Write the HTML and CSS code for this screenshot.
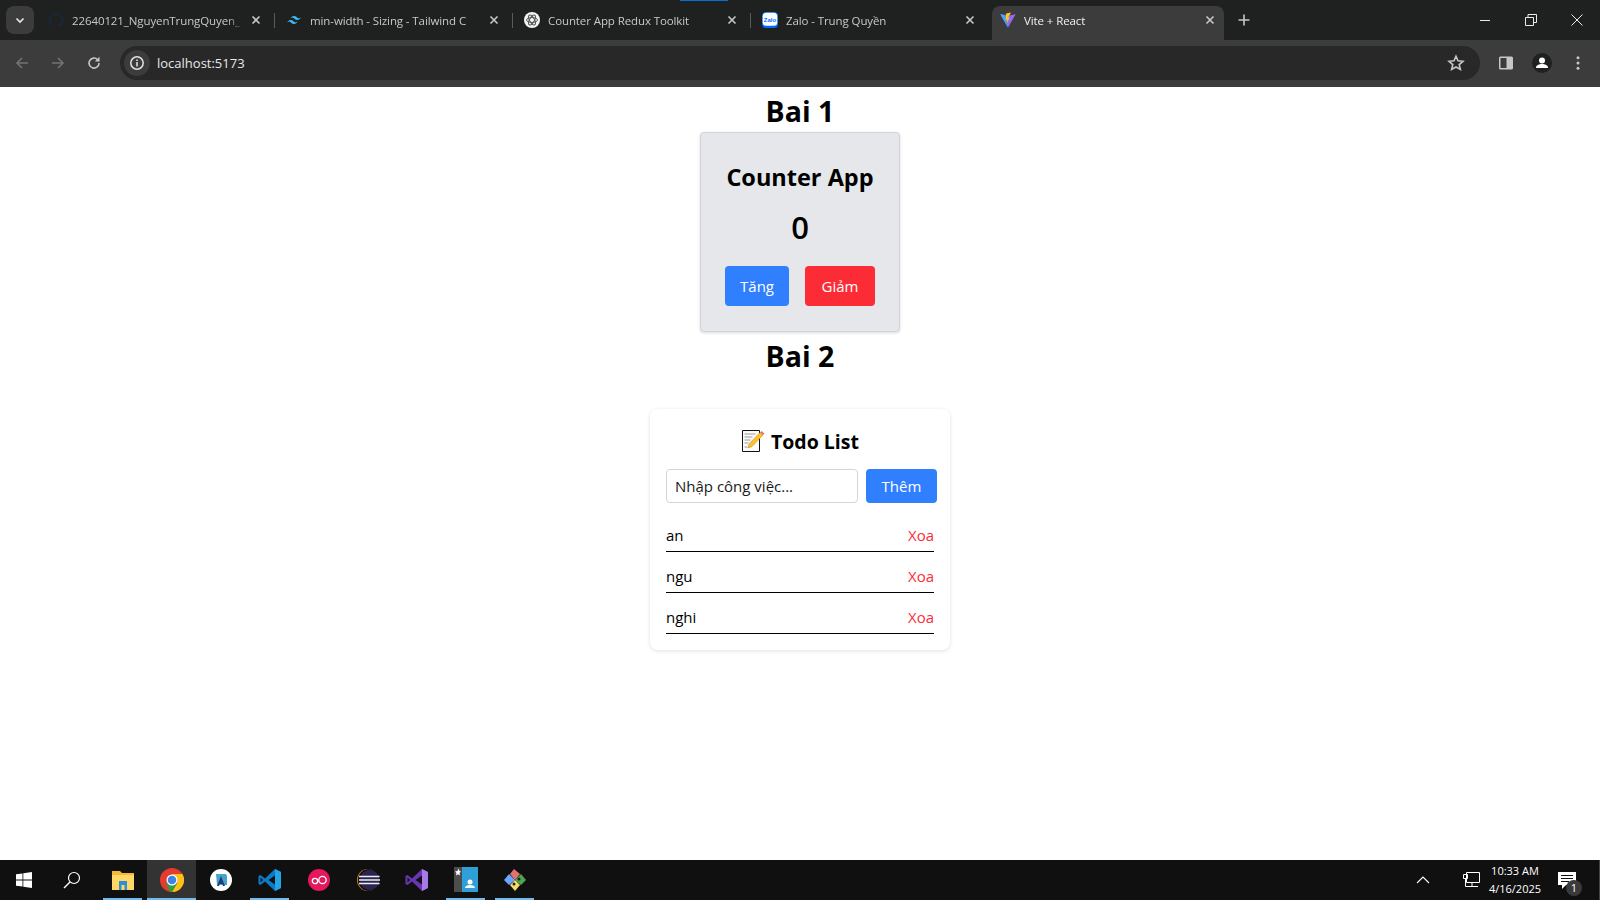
FILE: index.html
```html
<!DOCTYPE html>
<html lang="en">
<head>
    <meta charset="UTF-8">
    <title>Vite + React</title>
    <link rel="stylesheet" href="styles.css">
</head>
<body>
    <div class="share-mark"></div>

    <!-- Tab strip -->
    <div class="tabstrip">
        <div class="tab-search">
            <svg width="12" height="12" viewBox="0 0 12 12"><path d="M2.5 4.5 6 8l3.5-3.5" fill="none" stroke="#e8eaed" stroke-width="1.6"/></svg>
        </div>
        <div class="tab">
            <svg class="favicon" viewBox="0 0 16 16"><path fill="#1d2530" d="M8 0C3.58 0 0 3.58 0 8c0 3.54 2.29 6.53 5.47 7.59.4.07.55-.17.55-.38 0-.19-.01-.82-.01-1.49-2.01.37-2.53-.49-2.69-.94-.09-.23-.48-.94-.82-1.13-.28-.15-.68-.52-.01-.53.63-.01 1.08.58 1.23.82.72 1.21 1.87.87 2.33.66.07-.52.28-.87.51-1.07-1.78-.2-3.64-.89-3.64-3.95 0-.87.31-1.59.82-2.15-.08-.2-.36-1.02.08-2.12 0 0 .67-.21 2.2.82.64-.18 1.32-.27 2-.27s1.36.09 2 .27c1.53-1.04 2.2-.82 2.2-.82.44 1.1.16 1.92.08 2.12.51.56.82 1.27.82 2.15 0 3.07-1.87 3.75-3.65 3.95.29.25.54.73.54 1.48 0 1.07-.01 1.93-.01 2.2 0 .21.15.46.55.38A8.01 8.01 0 0016 8c0-4.42-3.58-8-8-8z"/></svg>
            <span class="tab-title">22640121_NguyenTrungQuyen_</span>
            <svg class="tab-close" viewBox="0 0 10 10"><path d="M1.5 1.5l7 7M8.5 1.5l-7 7"/></svg>
        </div>
        <div class="tab">
            <svg class="favicon" viewBox="0 0 24 24"><path fill="#38bdf8" d="M12 6c-2.67 0-4.33 1.33-5 4 1-1.33 2.17-1.83 3.5-1.5.76.19 1.31.74 1.91 1.35.98 1 2.12 2.15 4.59 2.15 2.67 0 4.33-1.33 5-4-1 1.33-2.17 1.83-3.5 1.5-.76-.19-1.31-.74-1.91-1.35C15.61 7.15 14.47 6 12 6zM7 12c-2.67 0-4.33 1.33-5 4 1-1.33 2.17-1.83 3.5-1.5.76.19 1.31.74 1.91 1.35C8.39 16.85 9.53 18 12 18c2.67 0 4.33-1.33 5-4-1 1.33-2.17 1.83-3.5 1.5-.76-.19-1.31-.74-1.91-1.35C10.61 13.15 9.47 12 7 12z"/></svg>
            <span class="tab-title">min-width - Sizing - Tailwind C</span>
            <svg class="tab-close" viewBox="0 0 10 10"><path d="M1.5 1.5l7 7M8.5 1.5l-7 7"/></svg>
        </div>
        <div class="tab">
            <svg class="favicon" viewBox="0 0 16 16"><circle cx="8" cy="8" r="8" fill="#f4f4f4"/><g fill="none" stroke="#555" stroke-width="1"><ellipse cx="8" cy="8" rx="5.500" ry="2.400"/><ellipse cx="8" cy="8" rx="5.500" ry="2.400" transform="rotate(60 8 8)"/><ellipse cx="8" cy="8" rx="5.500" ry="2.400" transform="rotate(120 8 8)"/></g></svg>
            <span class="tab-title">Counter App Redux Toolkit</span>
            <svg class="tab-close" viewBox="0 0 10 10"><path d="M1.5 1.5l7 7M8.5 1.5l-7 7"/></svg>
        </div>
        <div class="tab">
            <svg class="favicon" viewBox="0 0 16 16"><rect width="16" height="16" rx="4" fill="#0068ff"/><rect x=".7" y=".7" width="14.600" height="13" rx="3.500" fill="#fff"/><text x="8" y="9.600" font-size="6" font-weight="700" text-anchor="middle" fill="#0068ff" font-family="Liberation Sans, sans-serif">Zalo</text></svg>
            <span class="tab-title">Zalo - Trung Quyền</span>
            <svg class="tab-close" viewBox="0 0 10 10"><path d="M1.5 1.5l7 7M8.5 1.5l-7 7"/></svg>
        </div>
        <div class="tab tab-active">
            <svg class="favicon" viewBox="0 0 16 16"><path fill="#8f6cf5" d="M.3 2.300 8 15.600 15.700 2.300 8 3.700z"/><path fill="#3fa7ff" d="M.3 2.300 8 15.600 5 3z"/><path fill="#ffc517" d="M11 .6 6 1.600l-.4 6.600 1.600-.4-.4 3.400 3-5.600-1.700.3z"/></svg>
            <span class="tab-title">Vite + React</span>
            <svg class="tab-close" viewBox="0 0 10 10"><path d="M1.5 1.5l7 7M8.5 1.5l-7 7"/></svg>
        </div>
        <svg class="new-tab" width="12" height="12" viewBox="0 0 12 12"><path d="M6 .5v11M.5 6h11" stroke="#c4c7c5" stroke-width="1.6"/></svg>
        <div class="window-controls">
            <svg width="12" height="12" viewBox="0 0 12 12"><path d="M1 6.5h10" stroke="#e8eaed"/></svg>
            <svg width="12" height="12" viewBox="0 0 12 12"><path d="M.5 3.500h8v8h-8zM3 3.500V.5h8.500v8H8.500" fill="none" stroke="#e8eaed"/></svg>
            <svg width="12" height="12" viewBox="0 0 12 12"><path d="M.5.5l11 11M11.500.5l-11 11" stroke="#e8eaed"/></svg>
        </div>
    </div>

    <!-- Toolbar -->
    <div class="toolbar">
        <div class="nav-buttons">
            <svg width="16" height="16" viewBox="0 0 16 16"><path d="M14 8H3M8 3 3 8l5 5" fill="none" stroke="#737373" stroke-width="1.6"/></svg>
            <svg width="16" height="16" viewBox="0 0 16 16"><path d="M2 8h11M8 3l5 5-5 5" fill="none" stroke="#737373" stroke-width="1.6"/></svg>
            <svg width="16" height="16" viewBox="0 0 16 16"><path d="M13 8a5 5 0 1 1-1.500-3.500L13 6" fill="none" stroke="#c7c7c7" stroke-width="1.6"/><path d="M13.500 1.800V6.500H8.800z" fill="#c7c7c7"/></svg>
        </div>
        <div class="address-bar">
            <div class="site-info">
                <svg width="16" height="16" viewBox="0 0 16 16"><circle cx="8" cy="8" r="6.200" fill="none" stroke="#e3e3e3" stroke-width="1.500"/><path d="M8 7v4.500M8 4.500v1.500" stroke="#e3e3e3" stroke-width="1.500"/></svg>
            </div>
            <span class="url">localhost:5173</span>
            <svg class="star" width="18" height="18" viewBox="0 0 18 18"><path d="M9 2.200l2 4.600 5 .5-3.800 3.300 1.200 4.900L9 13l-4.400 2.500 1.200-4.900L2 7.300l5-.5z" fill="none" stroke="#c7c7c7" stroke-width="1.600"/></svg>
        </div>
        <div class="toolbar-actions">
            <svg width="16" height="16" viewBox="0 0 16 16"><rect x="1" y="1.500" width="14" height="13" rx="1.500" fill="#c7c7c7"/><rect x="2.500" y="3" width="6" height="10" fill="#3c3c3c"/></svg>
            <svg width="20" height="20" viewBox="0 0 20 20"><circle cx="10" cy="10" r="10" fill="#1f2121"/><circle cx="10" cy="7.500" r="3" fill="#fff"/><path d="M4 15c0-3 3-4 6-4s6 1 6 4z" fill="#fff"/></svg>
            <svg width="16" height="16" viewBox="0 0 16 16"><g fill="#c7c7c7"><circle cx="8" cy="2.800" r="1.500"/><circle cx="8" cy="8" r="1.500"/><circle cx="8" cy="13.200" r="1.500"/></g></svg>
        </div>
    </div>

    <!-- Page content -->
    <div class="page">
        <h1 class="page-title">Bai 1</h1>
        <div class="counter-card">
            <h2 class="counter-heading">Counter App</h2>
            <p class="counter-value">0</p>
            <div class="counter-buttons">
                <button class="btn btn-blue">Tăng</button>
                <button class="btn btn-red">Giảm</button>
            </div>
        </div>
        <h1 class="page-title">Bai 2</h1>
        <div class="todo-card">
            <h2 class="todo-heading">
                <svg width="24" height="24" viewBox="0 0 24 24">
                    <path d="M1.500 1.500h17v21h-17z" fill="#fafafa" stroke="#111"/>
                    <path d="M3.500 5h11M3.500 8h8M3.500 11h6M3.500 14h4M3.500 18h3" stroke="#9a9a9a"/>
                    <path d="M7 19l1-4L19 3.500l3 2.500L11 17.500z" fill="#fbc02d" stroke="#b8860b" stroke-width=".5"/>
                    <path d="M19 3.500l1.500-1.500 3 2.500L22 6z" fill="#e57373"/>
                </svg>
                <span>Todo List</span>
            </h2>
            <div class="todo-form">
                <input class="todo-input" type="text" placeholder="Nhập công việc...">
                <button class="btn btn-blue">Thêm</button>
            </div>
            <ul class="todo-list">
                <li><span>an</span><a class="todo-remove">Xoa</a></li>
                <li><span>ngu</span><a class="todo-remove">Xoa</a></li>
                <li><span>nghi</span><a class="todo-remove">Xoa</a></li>
            </ul>
        </div>
    </div>

    <!-- Windows taskbar -->
    <div class="taskbar">
        <div class="task-slot task-start">
            <svg width="16" height="16" viewBox="0 0 16 16"><path fill="#fff" d="M0 2.300 6.500 1.400v6.200H0zM7.300 1.300 16 0v7.600H7.300zM0 8.400h6.500v6.200L0 13.700zM7.300 8.400H16V16l-8.700-1.300z"/></svg>
        </div>
        <div class="task-slot task-search">
            <svg width="18" height="18" viewBox="0 0 18 18"><circle cx="11" cy="7" r="5.500" fill="none" stroke="#fff" stroke-width="1.200"/><path d="M7 11l-6 6" stroke="#fff" stroke-width="1.400"/></svg>
        </div>
        <div class="task-slot task-open">
            <svg width="22" height="20" viewBox="0 0 22 20"><path d="M0 1h8l2 2h12v17H0z" fill="#f4b63c"/><path d="M0 5h22v15H0z" fill="#ffd766"/><path d="M7 11h8v9h-2.500v-5h-3v5H7z" fill="#2b8fd8"/></svg>
        </div>
        <div class="task-slot task-open task-active">
            <svg width="24" height="24" viewBox="0 0 24 24"><circle cx="12" cy="12" r="12" fill="#e33b2e"/><path d="M12 24a12 12 0 0 0 10.400-18H12l5.200 9z" fill="#fbc116"/><path d="M1.600 6 7 15l-1 1 4 7.800A12 12 0 0 0 12 24l5.200-9H7z" fill="#2f9e44"/><circle cx="12" cy="12" r="5.500" fill="#fff"/><circle cx="12" cy="12" r="4.300" fill="#3f83e6"/></svg>
        </div>
        <div class="task-slot">
            <svg width="22" height="22" viewBox="0 0 22 22"><circle cx="11" cy="11" r="11" fill="#fff"/><path d="M6 5h10l1 2v9H7z" fill="#4aa3c7"/><path d="M11 7l4 10h-2l-.6-2H9.600L9 17H7z" fill="#1c3f7a"/></svg>
        </div>
        <div class="task-slot task-open">
            <svg width="24" height="24" viewBox="0 0 24 24"><path d="M17 1l6 3v16l-6 3-10-9.500L2.500 17 .5 16v-8l2-1L7 10.500z" fill="#0a7bc4"/><path d="M17 1l6 3v16l-6 3z" fill="#23a3ea"/><path d="M17 7.500 10.500 12l6.500 4.500z" fill="#101010"/><path d="M2.500 9.500v5L5 12z" fill="#101010"/></svg>
        </div>
        <div class="task-slot">
            <svg width="22" height="22" viewBox="0 0 22 22"><circle cx="11" cy="11" r="11" fill="#e5175f"/><circle cx="7" cy="12" r="2.700" fill="none" stroke="#fff" stroke-width="1.300"/><circle cx="14.500" cy="11" r="3.700" fill="none" stroke="#fff" stroke-width="1.300"/></svg>
        </div>
        <div class="task-slot">
            <svg width="24" height="24" viewBox="0 0 24 24"><circle cx="12" cy="12" r="11" fill="#f7941e"/><circle cx="12.800" cy="12" r="11" fill="#101010"/><circle cx="13.500" cy="12" r="10" fill="#2c2255"/><path d="M3 8.500h20.500M3 12h21M3 15.500h20.500" stroke="#eee" stroke-width="1.500"/></svg>
        </div>
        <div class="task-slot">
            <svg width="24" height="24" viewBox="0 0 24 24"><path d="M17 1l6 3v16l-6 3-10-9.500L2.500 17 .5 16v-8l2-1L7 10.500z" fill="#6a35b0"/><path d="M17 1l6 3v16l-6 3z" fill="#a67be6"/><path d="M17 7.500 10.500 12l6.500 4.500z" fill="#101010"/><path d="M2.500 9.500v5L5 12z" fill="#101010"/></svg>
        </div>
        <div class="task-slot task-open">
            <svg width="24" height="26" viewBox="0 0 24 26"><rect width="8" height="25" fill="#4d4d4d"/><rect x="8" width="16" height="25" fill="#2f9fd8"/><path d="M1 4.500 3.500 4 4.500 1.500 5.500 4 7 4.500 5.500 6l.5 2.500-2-1.200L2 8.500 2.500 6z" fill="#fff"/><circle cx="16" cy="15" r="2.500" fill="#fff"/><path d="M11 21c0-2 2.500-3 5-3s5 1 5 3z" fill="#fff"/></svg>
        </div>
        <div class="task-slot task-open">
            <svg width="24" height="24" viewBox="0 0 24 24"><path d="M12 12 6 6 1 12l5 5z" fill="#6aa5ff"/><path d="M12 12l-5-6 4-5 6 5z" fill="#e5716f"/><path d="M12 12l6-6 5 6-5 5z" fill="#4ea64f"/><path d="M12 12l-5 5 5 6 5-6z" fill="#f6dc6c"/><circle cx="16" cy="11" r="1.500" fill="#222"/><circle cx="11" cy="16" r="1.500" fill="#222"/></svg>
        </div>
        <div class="tray">
            <svg width="14" height="8" viewBox="0 0 14 8"><path d="M1 7l6-6 6 6" fill="none" stroke="#fff" stroke-width="1.100"/></svg>
            <svg class="tray-network" width="17" height="16" viewBox="0 0 17 16"><path d="M3.500.5h13v10h-13zM9 10.500v3.500M5 14.500h10M.5 2.500h4v4h-4zM2.500 6.500v8h3" fill="none" stroke="#fff"/></svg>
            <div class="clock"><span>10:33 AM</span><span>4/16/2025</span></div>
            <div class="notify">
                <svg width="18" height="17" viewBox="0 0 18 17"><path d="M0 0h18v13H8l-4 4v-4H0z" fill="#fff"/><path d="M3 3.500h12M3 6.500h12M3 9.500h8" stroke="#101010"/></svg>
                <span class="notify-count">1</span>
            </div>
        </div>
    </div>
</body>
</html>
```

FILE: styles.css
```css
* {
    box-sizing: border-box;
}

body {
    margin: 0;
    height: 100vh;
    display: flex;
    flex-direction: column;
    overflow: hidden;
    font-family: "Open Sans", "Noto Sans", sans-serif;
    background-color: #fff;
}

.share-mark {
    position: absolute;
    left: 680px;
    top: 0;
    width: 48px;
    height: 1px;
    background-color: #0a6cd6;
}

/* Tab strip */
.tabstrip {
    height: 40px;
    display: flex;
    align-items: center;
    background-color: #1f2121;
    padding-left: 6px;
}

.tab-search {
    width: 28px;
    height: 28px;
    margin-right: 3px;
    border-radius: 8px;
    background-color: #3c3c3c;
    display: flex;
    align-items: center;
    justify-content: center;
}

.tab {
    width: 238px;
    height: 40px;
    display: flex;
    align-items: center;
    padding-left: 11px;
    position: relative;
}

.tab::after {
    content: "";
    position: absolute;
    right: 0;
    top: 13px;
    height: 15px;
    width: 1px;
    background-color: #5a5c5c;
}

.tab:nth-child(5)::after {
    display: none;
}

.favicon {
    width: 16px;
    height: 16px;
    flex-shrink: 0;
    margin-right: 8px;
}

.tab-title {
    width: 172px;
    overflow: hidden;
    white-space: nowrap;
    font-size: 11.5px;
    letter-spacing: -0.1px;
    color: #c7c9c9;
    -webkit-mask-image: linear-gradient(to right, #000 155px, transparent 172px);
    mask-image: linear-gradient(to right, #000 155px, transparent 172px);
}

.tab-close {
    width: 10px;
    height: 10px;
    margin-left: 7px;
    flex-shrink: 0;
}

.tab-close path {
    fill: none;
    stroke: #c7c9c9;
    stroke-width: 1.6;
}

.tab-active {
    width: 232px;
    height: 34px;
    margin-left: 3px;
    align-self: flex-end;
    padding: 0 0 6px 8px;
    border-radius: 8px 8px 0 0;
    background-color: #3c3c3c;
}

.tab-active::after {
    display: none;
}

.tab-active .tab-title {
    color: #f1f1f1;
    width: 174px;
}

.new-tab {
    margin-left: 14px;
}

.window-controls {
    margin-left: auto;
    display: flex;
    gap: 34px;
    padding-right: 17px;
}

/* Toolbar */
.toolbar {
    height: 47px;
    display: flex;
    align-items: flex-start;
    background-color: #3c3c3c;
    padding-top: 6px;
}

.nav-buttons {
    width: 120px;
    height: 34px;
    display: flex;
    align-items: center;
    gap: 20px;
    padding-left: 14px;
}

.address-bar {
    width: 1360px;
    height: 34px;
    display: flex;
    align-items: center;
    border-radius: 17px;
    background-color: #282828;
    padding: 0 15px 0 4px;
}

.site-info {
    width: 26px;
    height: 26px;
    border-radius: 50%;
    background-color: #3c3c3c;
    display: flex;
    align-items: center;
    justify-content: center;
}

.url {
    margin-left: 7px;
    font-size: 13px;
    color: #e8e8e8;
}

.star {
    margin-left: auto;
}

.toolbar-actions {
    flex: 1;
    height: 34px;
    display: flex;
    align-items: center;
    gap: 18px;
    padding-left: 18px;
}

/* Page */
.page {
    flex: 1;
    display: flex;
    flex-direction: column;
    align-items: center;
    background-color: #fff;
}

.page-title {
    margin: 0;
    padding-top: 4px;
    font-size: 28.5px;
    line-height: 41px;
    font-weight: 700;
    color: #000;
}

.counter-card {
    width: 200px;
    height: 200px;
    display: flex;
    flex-direction: column;
    align-items: center;
    padding-top: 26px;
    background-color: #e5e7eb;
    border: 1px solid #d1d5db;
    border-radius: 4px;
    box-shadow: 0 1px 3px rgba(0, 0, 0, 0.15);
}

.counter-heading {
    margin: 0 0 14px;
    font-size: 23.5px;
    line-height: 36px;
    font-weight: 700;
    color: #000;
}

.counter-value {
    margin: 0 0 21px;
    font-size: 31px;
    line-height: 36px;
    font-weight: 600;
    color: #000;
}

.counter-buttons {
    display: flex;
    gap: 16px;
}

.btn {
    height: 40px;
    padding: 0 15px;
    border: none;
    border-radius: 4px;
    font-family: inherit;
    font-size: 15px;
    color: #fff;
    cursor: pointer;
}

.btn-blue {
    background-color: #2f7fff;
}

.btn-red {
    padding: 0 16.5px;
    background-color: #fb2c36;
}

.todo-card {
    width: 300px;
    margin-top: 32px;
    padding: 16px;
    background-color: #fff;
    border-radius: 8px;
    box-shadow: 0 1px 4px rgba(0, 0, 0, 0.12);
}

.todo-heading {
    margin: 0 0 14px;
    padding-top: 2px;
    display: flex;
    align-items: center;
    justify-content: center;
    gap: 6px;
    height: 30px;
    font-size: 19.5px;
    font-weight: 700;
    color: #000;
}

.todo-form {
    display: flex;
    gap: 8px;
}

.todo-form .btn {
    height: 34px;
    padding: 0 15.5px;
    flex-shrink: 0;
}

.todo-input {
    width: 192px;
    height: 34px;
    flex-shrink: 0;
    padding: 0 8px;
    border: 1px solid #d1d5db;
    border-radius: 4px;
    font-family: inherit;
    font-size: 15px;
    color: #000;
    outline: none;
}

.todo-input::placeholder {
    color: #1a1a1a;
    opacity: 1;
}

.todo-list {
    list-style: none;
    margin: 8px 0 0;
    padding: 0;
}

.todo-list li {
    display: flex;
    justify-content: space-between;
    padding: 12px 0 4px;
    font-size: 15px;
    line-height: 24px;
    color: #000;
    border-bottom: 1px solid #000;
}

.todo-remove {
    color: #fb2c36;
    cursor: pointer;
}

/* Taskbar */
.taskbar {
    height: 40px;
    display: flex;
    background-color: #101010;
}

.task-slot {
    width: 49px;
    height: 40px;
    display: flex;
    align-items: center;
    justify-content: center;
    position: relative;
}

.task-start {
    width: 48px;
}

.task-search {
    margin-right: 2px;
    width: 48px;
}

.task-open::after {
    content: "";
    position: absolute;
    left: 5px;
    right: 5px;
    bottom: 0;
    height: 2px;
    background-color: #76b9ed;
}

.task-active {
    background-color: #333;
}

.task-active::after {
    left: 0;
    right: 0;
}

.tray {
    margin-left: auto;
    display: flex;
    align-items: center;
    color: #fff;
    padding-right: 23px;
    border-right: 1px solid #444;
}

.tray-network {
    margin-left: 33px;
    margin-right: -2px;
}

.clock {
    width: 74px;
    display: flex;
    flex-direction: column;
    align-items: center;
    font-size: 11px;
    line-height: 18px;
}

.notify {
    margin-left: 6px;
    position: relative;
    display: flex;
}

.notify-count {
    position: absolute;
    left: 8px;
    top: 8px;
    width: 16px;
    height: 16px;
    border-radius: 50%;
    background-color: #3a3a3a;
    font-size: 11px;
    line-height: 16px;
    text-align: center;
}
```
